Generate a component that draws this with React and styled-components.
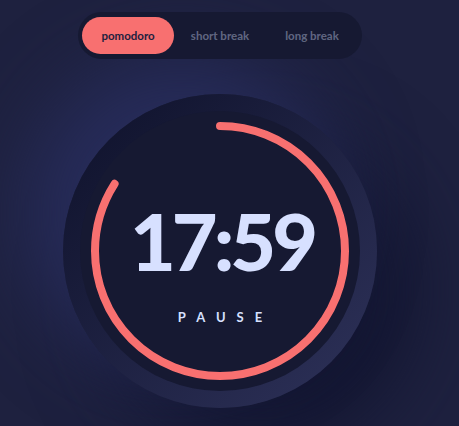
import React from "react";
import styled, { createGlobalStyle } from "styled-components";

const Global = createGlobalStyle`
  html, body {
    margin: 0;
    padding: 0;
    background: #1e213f;
    height: 100%;
    overflow: hidden;
  }
  * { box-sizing: border-box; }
`;

const Page = styled.main`
  width: 440px;
  height: 426px;
  display: flex;
  flex-direction: column;
  align-items: center;
  padding-top: 12px;
  gap: 35px;
  font-family: Lato, "Open Sans", sans-serif;
`;

const TabBar = styled.nav`
  position: relative;
  z-index: 1;
  display: flex;
  padding: 5px 4px;
  background: #161932;
  border-radius: 24px;
`;

const Tab = styled.button`
  appearance: none;
  width: 92px;
  height: 37px;
  border: none;
  border-radius: 19px;
  font-family: inherit;
  font-weight: 700;
  font-size: 11.5px;
  cursor: pointer;
  background: ${(p) => (p.$active ? "#f87070" : "transparent")};
  color: ${(p) => (p.$active ? "#1e213f" : "rgba(215, 224, 255, 0.4)")};
`;

const Outer = styled.section`
  width: 314px;
  height: 314px;
  border-radius: 50%;
  display: flex;
  align-items: center;
  justify-content: center;
  background: linear-gradient(315deg, #2e325a 0%, #0e112a 100%);
  box-shadow: -38px -38px 77px #272c5a, 38px 38px 77px #121530;
`;

const Inner = styled.div`
  position: relative;
  width: 280px;
  height: 280px;
  border-radius: 50%;
  background: #161932;
  display: flex;
  flex-direction: column;
  align-items: center;
  justify-content: center;
`;

const Ring = styled.svg`
  position: absolute;
  inset: 0;
  transform: rotate(-90deg);
`;

const Time = styled.div`
  color: #d7e0ff;
  font-weight: 900;
  font-size: 79px;
  line-height: 1;
  letter-spacing: -4px;
  margin-top: 23px;
  margin-right: -4px;
`;

const Action = styled.button`
  appearance: none;
  margin-top: 29px;
  border: none;
  background: none;
  color: #d7e0ff;
  font-family: inherit;
  font-weight: 700;
  font-size: 13px;
  letter-spacing: 11px;
  padding: 0 0 0 11px;
  cursor: pointer;
`;

const R = 125;
const C = 2 * Math.PI * R;
const progress = 0.84;

export default function App() {
  return (
    <>
      <Global />
      <Page>
        <TabBar>
          <Tab $active>pomodoro</Tab>
          <Tab>short break</Tab>
          <Tab>long break</Tab>
        </TabBar>
        <Outer>
          <Inner>
            <Ring width="280" height="280" viewBox="0 0 280 280">
              <circle
                cx="140"
                cy="140"
                r={R}
                fill="none"
                stroke="#f87070"
                strokeWidth="8"
                strokeLinecap="round"
                strokeDasharray={`${C * progress} ${C}`}
              />
            </Ring>
            <Time>17:59</Time>
            <Action>PAUSE</Action>
          </Inner>
        </Outer>
      </Page>
    </>
  );
}
